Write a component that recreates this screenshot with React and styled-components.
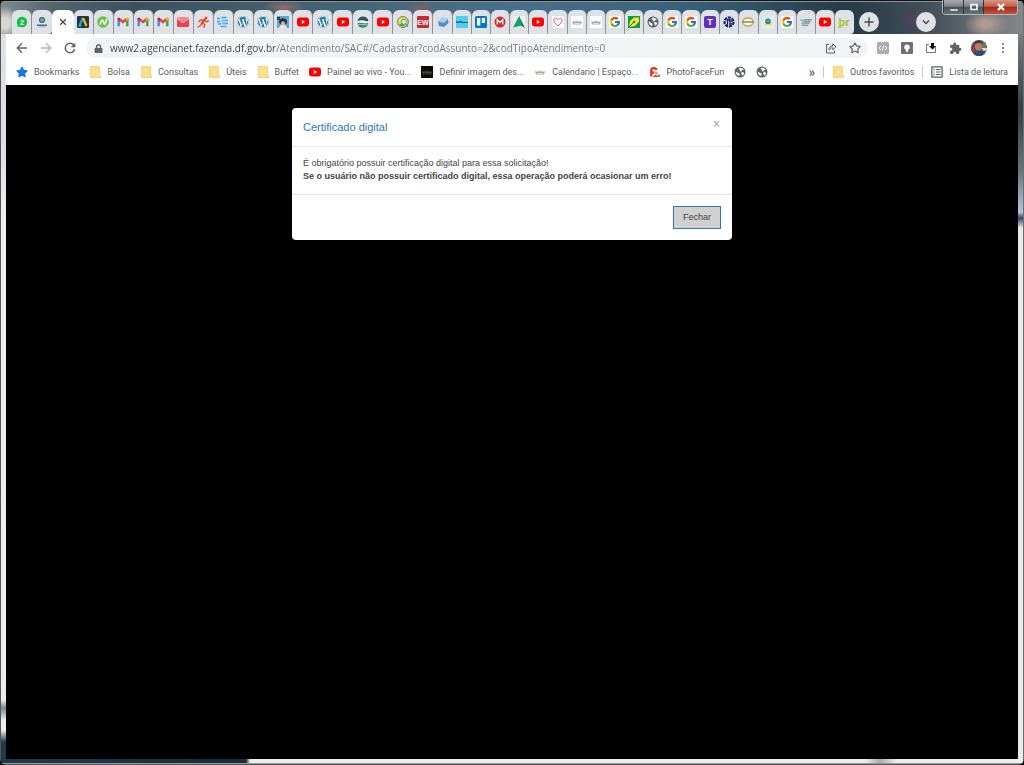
import React from "react";
import styled, { createGlobalStyle, css } from "styled-components";
import { FaWordpress, FaLock, FaStar } from "react-icons/fa";
import { MdExtension } from "react-icons/md";
import { FcGoogle } from "react-icons/fc";
import { Star } from "lucide-react";

const GlobalStyle = createGlobalStyle`
  *, *::before, *::after { box-sizing: border-box; }
  html, body { margin: 0; background: #000; }
  button { margin: 0; padding: 0; border: 0; background: none; font: inherit; color: inherit; cursor: pointer; }
  svg { display: block; flex: none; }
`;

const uiFont = '"Open Sans", "Noto Sans", sans-serif';

const Desktop = styled.div`
  position: relative;
  display: flex;
  flex-direction: column;
  min-height: 100vh;
  padding: 0 6px 6px;
  border-radius: 6px;
  overflow: hidden;
  font-family: ${uiFont};
  background:
    linear-gradient(#555 0 0) left / 1px 100% no-repeat,
    linear-gradient(#6d6d6d 0 0) right / 1px 100% no-repeat,
    linear-gradient(#111 0 1px, #8d969c 1px 2px) top / 100% 2px no-repeat,
    linear-gradient(#8f999e 0 1px, #555 1px 2px) bottom / 100% 2px no-repeat,
    radial-gradient(ellipse closest-side, #d8d8cf 30%, transparent) -10px 6px / 30px 34px no-repeat,
    radial-gradient(ellipse closest-side, #8f6c70, transparent) 262px 0 / 44px 14px no-repeat,
    radial-gradient(ellipse closest-side, #80606a, transparent) 404px 2px / 34px 12px no-repeat,
    radial-gradient(ellipse closest-side, #57405fcc, transparent) 900px 8px / 24px 22px no-repeat,
    radial-gradient(ellipse closest-side, #3f6350aa, transparent) 914px 8px / 16px 20px no-repeat,
    radial-gradient(ellipse closest-side, #b09c94 20%, transparent) 964px 10px / 44px 28px no-repeat,
    linear-gradient(90deg, #7e8a8f 0, #55656e 5%, #3a5061 13%, #43606f 28%, #46718a 50%, #386179 67%, #263a47 83%, #44505a 91%, #85888a 100%) top / 100% 34px no-repeat,
    linear-gradient(90deg, #22394c 0, #1c2d3a 246px, #ececec 250px, #ececec calc(100% - 158px), #aaa calc(100% - 144px), #ececec calc(100% - 128px)) bottom / 100% 7px no-repeat,
    linear-gradient(#dfe2e7 34px, #dadde6 140px, #f0f0f0 220px, #ececec 700px, #71879a 708px, #eee 720px 730px, #22394c 742px) left / 6px 100% no-repeat,
    linear-gradient(#777c80 34px, #343e48 110px, #68727d 170px, #b9c4d4 212px, #33496d 218px, #e9e9e9 228px) right / 6px 100% no-repeat,
    #e9e9e9;
`;

const WindowControls = styled.div`
  position: absolute;
  top: 0;
  right: 6px;
  display: flex;
  height: 15px;
  border: 1px solid #b3b8bc;
  border-top: 0;
  border-radius: 0 0 4px 4px;
  overflow: hidden;
`;

const WindowButton = styled.button`
  display: grid;
  place-items: center;
  width: ${(p) => (p.$close ? 34 : 20)}px;
  border-left: 1px solid #30363b;
  background: ${(p) =>
    p.$close
      ? "linear-gradient(#d89382, #c4604c 45%, #a52a17 50%, #c3543b)"
      : "linear-gradient(#a6adb2, #7b848a 45%, #48535b 50%, #66727a)"};
`;

const TabStrip = styled.div`
  display: flex;
  align-items: flex-end;
  height: 34px;
  padding-left: 6px;
`;

const TabGroup = styled.div`
  display: flex;
  flex: 0 1 ${(p) => p.$width}px;
  min-width: 0;
`;

const Tab = styled.button`
  display: grid;
  flex: 1 1 0;
  min-width: 0;
  height: 24px;
  place-items: center;
  border-radius: 6px 6px 0 0;
  border-right: 1px solid #8f9296;
  background: #dee1e6;
  ${(p) => p.$last && css`
    border-right-color: transparent;
    border-bottom-right-radius: 4px;
  `}
`;

const ActiveTab = styled(Tab)`
  flex: 0 0 22px;
  border-right: 0;
  background: #fff;
`;

const RoundButton = styled.button`
  display: grid;
  flex: none;
  place-items: center;
  width: 20px;
  height: 20px;
  margin: 0 0 2px ${(p) => p.$gap}px;
  border-radius: 50%;
  background: #dee1e6;
`;

const Toolbar = styled.div`
  display: flex;
  align-items: center;
  height: 28px;
  padding: 0 3px 0 4px;
  background: #fff;
`;

const ToolButton = styled.button`
  display: grid;
  flex: none;
  place-items: center;
  width: 24px;
  height: 24px;
  color: ${(p) => (p.$muted ? "#b5b7ba" : "#5f6368")};
`;

const AddressBar = styled.form`
  display: flex;
  flex: 1;
  align-items: center;
  min-width: 0;
  height: 20px;
  margin: 0 3px 0 4px;
  padding: 0 1px 0 8px;
  border-radius: 10px;
  background: #f1f3f4;
  color: #5f6368;
`;

const AddressInput = styled.input`
  flex: 1;
  min-width: 0;
  height: 20px;
  margin: 0;
  padding: 0 0 0 7px;
  border: 0;
  outline: 0;
  font: 10px/20px ${uiFont};
  background: linear-gradient(90deg, #3c4043 172px, #75797d 172px);
  background-clip: text;
  -webkit-text-fill-color: transparent;
`;

const BookmarksBar = styled.nav`
  display: flex;
  align-items: center;
  gap: 10px;
  height: 23px;
  padding: 0 10px 4px;
  background: #fff;
  color: #5a5d61;
  font-family: Roboto, "Open Sans", sans-serif;
  font-size: 9px;
  line-height: 14px;
  white-space: nowrap;
`;

const Bookmark = styled.a`
  display: flex;
  align-items: center;
  gap: 6px;
  color: inherit;
  text-decoration: none;
`;

const Overflow = styled.button`
  margin-left: auto;
  font-size: 14px;
`;

const Divider = styled.span`
  width: 1px;
  height: 12px;
  margin: 0 -2px;
  background: #c9cbce;
`;

const Page = styled.main`
  flex: 1;
  padding: 23px 16px;
  background: #000;
  font-family: "Liberation Sans", Arial, sans-serif;
`;

const Dialog = styled.section`
  max-width: 440px;
  margin: 0 auto;
  border-radius: 4px;
  background: #fff;
  color: #444;
  font-size: 9px;
  line-height: 13px;
`;

const DialogHeader = styled.header`
  display: flex;
  align-items: flex-start;
  justify-content: space-between;
  padding: 11px;
  border-bottom: 1px solid #e8e8e8;
`;

const DialogTitle = styled.h1`
  margin: 0;
  color: #2a7ab8;
  font-size: 11px;
  font-weight: 400;
  line-height: 16px;
`;

const DialogClose = styled.button`
  width: 9px;
  color: #b8b8b8;
  font-size: 12px;
  font-weight: 700;
  line-height: 11px;
`;

const DialogBody = styled.div`
  padding: 10px 11px 11px;
  p { margin: 0; }
`;

const DialogFooter = styled.footer`
  display: flex;
  justify-content: flex-end;
  padding: 11px;
  border-top: 1px solid #e3e3e3;
`;

const DialogButton = styled.button`
  height: 23px;
  padding: 0 9px;
  border: 1px solid #2a7ab8;
  background: #d0d0d0;
`;

const Svg = ({ size = 12, children, ...rest }) => (
  <svg width={size} height={size} viewBox="0 0 12 12" aria-hidden="true" {...rest}>{children}</svg>
);

const Letters = ({ bg, fill = "#fff", round = 1, size = 9, children }) => (
  <Svg>
    <rect width="12" height="12" rx={round} fill={bg} />
    <text x="6" y={6 + size * 0.36} textAnchor="middle" fontFamily="Liberation Sans, sans-serif" fontWeight="700" fontSize={size} fill={fill}>{children}</text>
  </Svg>
);

const YouTube = () => (
  <Svg><rect y="1.5" width="12" height="9" rx="2.4" fill="#f00" /><path d="M4.800 4v4L8.200 6z" fill="#fff" /></Svg>
);
const Gmail = () => (
  <Svg>
    <path d="M.5 2.500v7.800h2.400V4.800z" fill="#4285f4" />
    <path d="M11.500 2.500v7.800H9.100V4.800z" fill="#34a853" />
    <path d="M.5 3.200C.5 1.600 2 1.300 2.900 2L6 4.400 9.100 2c.9-.7 2.400-.4 2.400 1.200L9.100 5.200 6 7.600 2.900 5.200z" fill="#ea4335" />
    <path d="M9.100 2c.9-.7 2.400-.4 2.400 1.200L9.100 5.200z" fill="#fbbc04" />
    <path d="M.5 3.200C.5 1.600 2 1.300 2.900 2v3.200z" fill="#c5221f" />
  </Svg>
);
const Mail = () => (
  <Svg><rect y="1.500" width="12" height="9.500" rx="1.500" fill="#ee4247" /><path d="M0 2.500c0-.6.500-1 1-1h10c.6 0 1 .4 1 1L6 6.600z" fill="#ff8587" /><path d="M.3 2.800 6 6.800l5.700-4" fill="none" stroke="#fff" strokeWidth=".7" /></Svg>
);
const Runner = () => (
  <Svg fill="none" stroke="#e8492b" strokeLinecap="round" strokeLinejoin="round">
    <circle cx="9" cy="2" r="1.500" fill="#e8492b" stroke="none" />
    <path d="M7.500 4 5 7.200" strokeWidth="2.600" />
    <path d="M6.500 4H3.500L2 5.500M8.200 4.500l1.300 1.300L11.300 5M5.500 7l2.200 1.500-.7 2.800M4.600 7.500 3.600 9.500 1 11" strokeWidth="1.400" />
  </Svg>
);
const WordPress = () => (
  <Svg><circle cx="6" cy="6" r="5.500" fill="#fff" /><FaWordpress size={12} color="#21759b" /></Svg>
);
const Google = () => (
  <Svg><rect width="12" height="12" rx="1" fill="#fff" /><FcGoogle x="0" y="0" size={12} /></Svg>
);
const Ads = () => (
  <Svg><rect width="12" height="12" rx="1" fill="#243444" /><path d="M5.700 2 2.500 10" stroke="#1e9af0" strokeWidth="2.300" /><path d="m6 2 3.500 8" stroke="#fbbc04" strokeWidth="2.300" /><circle cx="3" cy="9.400" r="1.300" fill="#34c26a" /></Svg>
);
const Lime = () => (
  <Svg><circle cx="6" cy="6" r="5.800" fill="#6cc04a" /><path d="M2.500 8.500C4 8 4 4 5.300 4S6.500 8.300 7.600 8.300 8.600 4 10.200 3" stroke="#fff" strokeWidth="1.500" fill="none" /></Svg>
);
const Tree = () => (
  <Svg fill="none" stroke="#36a8ee"><path d="M0 2.500h3M4.500 1.500h5M0 5.500h3.500M5 4.500h6M1 8h3M5 7.500h6M3.500 10.500h6" strokeWidth="1.300" /><path d="M7 2v9" stroke="#8fd0f6" /></Svg>
);
const Portrait = () => (
  <Svg><rect width="12" height="12" fill="#58a7d4" /><path d="M2 6c0-5 8-5 8 0l-1 2H3z" fill="#2b2a2e" /><circle cx="6" cy="7.300" r="2" fill="#e6b48b" /><path d="M2 12c0-4 8-4 8 0z" fill="#efe8dc" /><path d="M0 1h3v3H0z" fill="#29485f" /></Svg>
);
const Hill = () => (
  <Svg><circle cx="6" cy="6" r="5.700" fill="#fff" /><path d="M.5 5A5.600 5.600 0 0 1 11.500 5C9 6.500 7 3 .5 5z" fill="#2a5365" /><path d="M.5 7.200C4 5.500 7 8.500 11.400 6.800A5.500 5.500 0 0 1 .5 7.200z" fill="#2b8a64" /><path d="M1.500 8.600c3-1 6 1 9 0" fill="none" stroke="#fff" strokeWidth=".6" /></Svg>
);
const Swirl = () => (
  <Svg><circle cx="6" cy="6" r="5.400" fill="#f4e13f" stroke="#4d7a70" strokeWidth=".9" /><path d="M2 8a4.400 4.400 0 0 0 6 1.800L6 7z" fill="#3f9f60" /><circle cx="7" cy="5.800" r="2.600" fill="#d5ebf2" stroke="#58808c" strokeWidth=".8" /><path d="M8.800 8 11 10.800" stroke="#396" strokeWidth="1.200" /></Svg>
);
const Eraser = () => (
  <Svg><path d="m1 5.500 5-4 5 1.500L11.500 7 7 11 2 10z" fill="#4a91c9" /><path d="m1 5.500 5-4 5 1.500L7 7z" fill="#a4d1ee" /></Svg>
);
const CyanWave = () => (
  <Svg><rect width="12" height="12" fill="#51cdec" /><path d="M0 6.200h3l1.500-.7 1.500 1h6" stroke="#17506f" strokeWidth="1.200" fill="none" /></Svg>
);
const Trello = () => (
  <Svg><rect width="12" height="12" rx="1.500" fill="#0079c6" /><rect x="2" y="2" width="3.300" height="7.500" rx=".5" fill="#fff" /><rect x="6.800" y="2" width="3.300" height="5" rx=".5" fill="#fff" /></Svg>
);
const Mega = () => (
  <Svg><circle cx="6" cy="6" r="5.500" fill="#d9272e" /><path d="M3.300 8.500V3.800L6 6.500l2.700-2.700v4.700" stroke="#fff" strokeWidth="1.400" fill="none" /></Svg>
);
const Peak = () => (
  <Svg><rect width="12" height="12" fill="#edf4f0" /><path d="M6 0 12 12 7 9z" fill="#096c45" /><path d="M6 0 0 11.500 9.500 9.500z" fill="#16a068" /></Svg>
);
const Heart = () => (
  <Svg><rect width="12" height="12" fill="#fff" /><path d="M6 10C3 7.500 1.500 5.500 2 3.500S5 2 6 4c1-2 3.500-2.200 4-.3S9 7.500 6 10z" fill="none" stroke="#e4556a" strokeWidth="1" /></Svg>
);
const Crown = ({ dark }) => (
  <Svg><rect width="12" height="12" fill={dark ? "#0a0a0a" : "#fff"} /><path d="M1 5 3 6l1-1.500L5 6l1-2 1 2 1-1.500L9 6l2-1-1 3.500H2z" fill={dark ? "#51442a" : "#a3af9c"} /><path d="M3 7.500h6" stroke={dark ? "#111" : "#fff"} strokeWidth=".6" /></Svg>
);
const Pen = () => (
  <Svg><rect width="12" height="12" fill="#159748" /><path d="m1 11 1-6 4-3.500 5 0v4L7 10z" fill="#f4e430" /><path d="m1 11 4-4" stroke="#147c3d" /><circle cx="6" cy="6" r="1.200" fill="#147c3d" /></Svg>
);
const Globe = () => (
  <Svg><circle cx="6" cy="6" r="5.500" fill="#5f6368" /><path d="M1.700 5.600 4 6.800c1 .2 1.800.5 1.700 1.500L5.200 10C3 9.800 1.400 8 1.700 5.600z" fill="#f1f1f1" /><path d="M5 2c2-.6 3.800.2 4.800 1.800L8 4.200 7.500 5.500 5.800 5.200 6.200 4 4.600 3.200zM7 6.600 9 6l1.200 1C10 8.400 9.200 9.300 8 9.700z" fill="#f1f1f1" /></Svg>
);
const Gear = () => (
  <Svg fill="none" stroke="#18236f"><circle cx="6" cy="6" r="4.500" strokeWidth="2.200" strokeDasharray="3 .9" /><path d="M4.500 3v6M4.500 4H7M7 2.500v7M7 5h2.500M7 8h2" strokeWidth="1.300" /></Svg>
);
const Ring = () => (
  <Svg><ellipse cx="6" cy="6" rx="5.200" ry="4" fill="#f7f5e9" stroke="#cda63e" strokeWidth="1.400" /><path d="M0 6h12" stroke="#8b8572" strokeWidth="1.500" /></Svg>
);
const Badge = () => (
  <Svg><rect width="12" height="12" fill="#edf1ee" opacity=".6" /><path d="M1 7.500c3-2 7-2 10 0-3 2.500-7 2.500-10 0z" fill="#f1dc35" /><circle cx="6" cy="5.300" r="2.800" fill="#1789b8" /><path d="M4 5h4" stroke="#71bc60" /></Svg>
);
const Cart = () => (
  <Svg><path d="M4 3.500h7.500L8.500 8H2z" fill="#b6d0c5" stroke="#719486" strokeWidth=".8" /><path d="M0 4h3M3.500 5.700h6.200M6.300 3.500 5 8M9 3.500 7 8M1.500 9.500h6.500" stroke="#719486" strokeWidth=".8" fill="none" /></Svg>
);
const Registro = () => (
  <Svg><text x="6" y="9.500" textAnchor="middle" fontFamily="Liberation Sans, sans-serif" fontSize="11" fontWeight="700" fill="#a7c520">br</text><path d="M0 11h4" stroke="#a7c520" strokeWidth="1.300" /></Svg>
);
const WhatsApp = () => (
  <Svg><circle cx="6" cy="6" r="5.200" fill="#12c143" /><path d="m1 11 1-3 2 2z" fill="#12c143" /><text x="6" y="8.500" textAnchor="middle" fontFamily="Liberation Sans, sans-serif" fontSize="7" fontWeight="700" fill="#fff">2</text></Svg>
);
const Government = () => (
  <Svg><circle cx="6" cy="4" r="3" fill="#27639a" /><path d="M6 2v4M4 4h4" stroke="#8fbd58" strokeWidth="1.300" /><path d="M1 9.200h10" stroke="#4d6787" strokeWidth="1.400" /><path d="M2.500 10.800h7" stroke="#9aa7b5" strokeWidth=".8" /></Svg>
);
const Folder = () => (
  <Svg><path d="M1.500.5h9v8l1 .7v2.300h-10z" fill="#fbe08c" stroke="#edc95f" strokeWidth=".7" /></Svg>
);
const Photo = () => (
  <Svg><path d="M2.300 10.500V4.500c0-3 4.700-3 5.200-.5M2.500 6.500H5" fill="none" stroke="#e12f2c" strokeWidth="2.300" /><circle cx="7" cy="7" r="1.800" fill="#dba56d" /><path d="M4 11c1-2.500 4-2.500 5 0z" fill="#b7382f" /><path d="M8.500 8.500H11V11H8.500z" fill="#6b9b57" /></Svg>
);
const ReadingList = () => (
  <Svg fill="none" stroke="#55595e"><rect x=".9" y=".9" width="10.200" height="10.200" strokeWidth="1.200" /><path d="M2.500 3.500h1.200M5 3.500h4.500M2.500 6h1.200M5 6h4.500M2.500 8.500h1.200M5 8.500h4.500" strokeWidth="1.100" /></Svg>
);

const pinned = [["WhatsApp", <WhatsApp />], ["Governo", <Government />]];
const tabsLeft = [
  ["Anúncios", <Ads />], ["Notas", <Lime />], ["Gmail", <Gmail />], ["Gmail", <Gmail />], ["Gmail", <Gmail />],
  ["E-mail", <Mail />], ["Corrida", <Runner />], ["Diagrama", <Tree />],
  ["WordPress", <WordPress />], ["WordPress", <WordPress />], ["Retrato", <Portrait />], ["YouTube", <YouTube />],
  ["WordPress", <WordPress />], ["YouTube", <YouTube />], ["Meio ambiente", <Hill />], ["YouTube", <YouTube />],
  ["Busca", <Swirl />], ["EW", <Letters bg="#c92a2f" size={7}>EW</Letters>], ["Ferramenta", <Eraser />],
];
const tabsRight = [
  ["Onda", <CyanWave />], ["Trello", <Trello />], ["Mega", <Mega />], ["Pico", <Peak />], ["YouTube", <YouTube />],
  ["Favoritos", <Heart />], ["Espaço", <Crown />], ["Espaço", <Crown />], ["Google", <Google />], ["Editor", <Pen />],
  ["Site", <Globe />], ["Google", <Google />], ["Google", <Google />],
  ["T", <Letters bg="#6230b8" round={2}>T</Letters>], ["Engenharia", <Gear />], ["Anel", <Ring />], ["Brasil", <Badge />],
  ["Google", <Google />], ["Loja", <Cart />], ["YouTube", <YouTube />], ["Registro", <Registro />],
];
const bookmarks = [
  ["Bookmarks", <FaStar size={12} color="#1a73e8" />], ["Bolsa", <Folder />], ["Consultas", <Folder />],
  ["Úteis", <Folder />], ["Buffet", <Folder />], ["Painel ao vivo - You...", <YouTube />],
  ["Definir imagem des...", <Crown dark />], ["Calendario | Espaço...", <Crown />],
  ["PhotoFaceFun", <Photo />], ["", <Globe />], ["", <Globe />],
];

const Tabs = ({ items, width, closed }) => (
  <TabGroup $width={width}>
    {items.map(([name, icon], i) => (
      <Tab key={i} aria-label={name} $last={closed && i === items.length - 1}>{icon}</Tab>
    ))}
  </TabGroup>
);

export default function App() {
  return (
    <Desktop>
      <GlobalStyle />
      <WindowControls>
        <WindowButton aria-label="Minimizar"><svg width="10" height="10"><path d="M1 7h8v2H1z" fill="#fff" stroke="#444" strokeWidth=".5" /></svg></WindowButton>
        <WindowButton aria-label="Maximizar"><svg width="10" height="10"><path d="M2 2.500h6v5H2z" fill="none" stroke="#fff" strokeWidth="1.600" /></svg></WindowButton>
        <WindowButton $close aria-label="Fechar janela"><svg width="10" height="10"><path d="m2 2 6 6M8 2 2 8" stroke="#fff" strokeWidth="2.200" /></svg></WindowButton>
      </WindowControls>

      <TabStrip>
        <Tabs items={pinned} width={40} closed />
        <ActiveTab aria-label="Fechar guia"><Svg><path d="m3.200 3.200 5.600 5.600m0-5.600L3.200 8.800" stroke="#45494d" strokeWidth="1.300" /></Svg></ActiveTab>
        <Tabs items={tabsLeft} width={379} />
        <Tabs items={tabsRight} width={401} closed />
        <RoundButton $gap={5} aria-label="Nova guia"><Svg><path d="M6 1.500v9M1.500 6h9" stroke="#45494d" strokeWidth="1.400" /></Svg></RoundButton>
        <RoundButton $gap={37} aria-label="Pesquisar guias"><Svg><path d="m3 4.500 3 3 3-3" stroke="#45494d" strokeWidth="1.400" fill="none" /></Svg></RoundButton>
      </TabStrip>

      <Toolbar>
        <ToolButton aria-label="Voltar"><Svg fill="none" stroke="currentColor" strokeWidth="1.400"><path d="M11 6H1.500M6 1.300 1.300 6 6 10.700" /></Svg></ToolButton>
        <ToolButton $muted aria-label="Avançar"><Svg fill="none" stroke="currentColor" strokeWidth="1.400"><path d="M1 6h9.500M6 1.300 10.700 6 6 10.700" /></Svg></ToolButton>
        <ToolButton aria-label="Recarregar"><Svg><path d="M10 3.500A4.700 4.700 0 1 0 10.600 7.200" fill="none" stroke="currentColor" strokeWidth="1.500" /><path d="M11.300.7v4.600H6.700z" fill="currentColor" /></Svg></ToolButton>
        <AddressBar onSubmit={(e) => e.preventDefault()}>
          <FaLock size={9} />
          <AddressInput aria-label="Endereço" defaultValue="www2.agencianet.fazenda.df.gov.br/Atendimento/SAC#/Cadastrar?codAssunto=2&codTipoAtendimento=0" />
          <ToolButton type="button" aria-label="Compartilhar"><Svg fill="none" stroke="currentColor" strokeWidth="1"><path d="M4 2.500H1.500v8.500h8V8.500" /><path d="M3.800 8C4 5.200 5.500 4 7.800 4V1.800l3.200 3-3.200 3V5.800C6 5.800 4.800 6.500 3.800 8z" /></Svg></ToolButton>
          <ToolButton type="button" aria-label="Adicionar aos favoritos"><Star size={12} strokeWidth={2.400} /></ToolButton>
        </AddressBar>
        <ToolButton aria-label="Código"><Svg><rect width="12" height="12" rx="1" fill="#a9adb6" /><path d="M4 4 2 6l2 2M8 4l2 2-2 2M6.700 3.500 5.300 8.500" fill="none" stroke="#fff" strokeWidth=".9" /></Svg></ToolButton>
        <ToolButton aria-label="Extensão"><Svg><rect width="12" height="12" rx="1" fill="#6d7175" /><circle cx="6" cy="5.200" r="2.700" fill="#fff" /><path d="M4.800 8h2.400v1.800H4.800z" fill="#fff" /></Svg></ToolButton>
        <ToolButton aria-label="Baixar"><Svg><path d="M4 2.500H1.500v8h9V4" fill="none" stroke="#777b7f" strokeWidth="1.100" /><path d="M6 1h3v3h2L7.500 7.500 4 4h2z" fill="#111" /></Svg></ToolButton>
        <ToolButton aria-label="Extensões"><MdExtension size={13} /></ToolButton>
        <ToolButton aria-label="Perfil"><Svg size={16}><defs><clipPath id="avatar"><circle cx="6" cy="6" r="6" /></clipPath></defs><g clipPath="url(#avatar)"><rect width="12" height="12" fill="#4b5157" /><path d="M8 0h4v7H8z" fill="#687b4e" /><path d="M0 5h3v4H0z" fill="#a33b35" /><ellipse cx="5.700" cy="4.700" rx="2.700" ry="3.400" fill="#b47c66" /><path d="M3 3c0-4 6-3 6 0L6 2z" fill="#45362f" /><path d="M1 12c1-5 9-5 10 0z" fill="#284b86" /><path d="M8 6h4v2H9z" fill="#ddd" /></g></Svg></ToolButton>
        <ToolButton aria-label="Menu"><Svg fill="currentColor"><circle cx="6" cy="2" r="1" /><circle cx="6" cy="6" r="1" /><circle cx="6" cy="10" r="1" /></Svg></ToolButton>
      </Toolbar>

      <BookmarksBar aria-label="Favoritos">
        {bookmarks.map(([name, icon], i) => (
          <Bookmark key={i} href="#" aria-label={name || "Site"}>{icon}{name && <span>{name}</span>}</Bookmark>
        ))}
        <Overflow aria-label="Mais favoritos">»</Overflow>
        <Divider />
        <Bookmark href="#"><Folder /><span>Outros favoritos</span></Bookmark>
        <Divider />
        <Bookmark href="#"><ReadingList /><span>Lista de leitura</span></Bookmark>
      </BookmarksBar>

      <Page>
        <Dialog role="dialog" aria-labelledby="dialog-title">
          <DialogHeader>
            <DialogTitle id="dialog-title">Certificado digital</DialogTitle>
            <DialogClose aria-label="Fechar diálogo">×</DialogClose>
          </DialogHeader>
          <DialogBody>
            <p>É obrigatório possuir certificação digital para essa solicitação!</p>
            <p><strong>Se o usuário não possuir certificado digital, essa operação poderá ocasionar um erro!</strong></p>
          </DialogBody>
          <DialogFooter>
            <DialogButton>Fechar</DialogButton>
          </DialogFooter>
        </Dialog>
      </Page>
    </Desktop>
  );
}
